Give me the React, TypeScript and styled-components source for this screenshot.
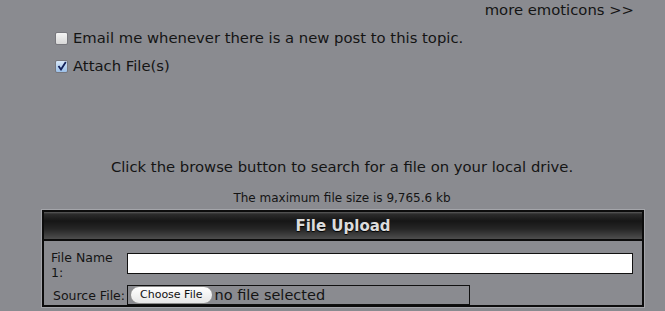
import React from "react";
import styled, { createGlobalStyle } from "styled-components";

const GlobalStyle = createGlobalStyle`
  html, body {
    margin: 0;
    padding: 0;
    background: #8a8b90;
  }
  body {
    font-family: "DejaVu Sans", Verdana, sans-serif;
    color: #141414;
  }
`;

const Page = styled.div`
  width: 665px;
  height: 311px;
  overflow: hidden;
`;

const TopBar = styled.div`
  display: flex;
  justify-content: flex-end;
  padding: 0 31px 0 0;
  height: 22px;
  font-size: 14.8px;
  line-height: 20px;
`;

const Options = styled.div`
  display: flex;
  flex-direction: column;
  gap: 8px;
  padding: 6px 0 0 55px;
`;

const OptionRow = styled.label`
  display: flex;
  align-items: center;
  gap: 5px;
  font-size: 14.8px;
  line-height: 20px;
`;

const Box = styled.span<{ checked?: boolean }>`
  width: 11px;
  height: 11px;
  border: 1px solid #77777d;
  border-radius: 2px;
  background: ${({ checked }) =>
    checked
      ? "linear-gradient(#d7e7f8, #9cc0e8)"
      : "linear-gradient(#f4f4f4, #d8d8d8)"};
  display: flex;
  align-items: center;
  justify-content: center;
`;

const Center = styled.div`
  margin: 81px 21px 0 40px;
  display: flex;
  flex-direction: column;
  align-items: center;
`;

const Hint = styled.div`
  font-size: 14.8px;
  line-height: 20px;
`;

const MaxSize = styled.div`
  margin-top: 13px;
  font-size: 12px;
  line-height: 16px;
`;

const Table = styled.div`
  align-self: stretch;
  margin: 4px 0 0 2px;
  border: 2px solid #0c0c0c;
  box-shadow: 0 0 0 1px #a4a5aa;
`;

const Header = styled.div`
  height: 27px;
  display: flex;
  align-items: center;
  justify-content: center;
  background: linear-gradient(
    #5c5c5c 0px,
    #2c2c2c 2px,
    #161616 9px,
    #262626 17px,
    #4e4e4e 27px
  );
  border-bottom: 2px solid #0c0c0c;
  color: #dcdcdc;
  font-weight: bold;
  font-size: 15px;
  text-shadow: 0 1px 1px #000;
`;

const Row = styled.div<{ top: number; align: string }>`
  display: grid;
  grid-template-columns: 76px 1fr;
  align-items: ${({ align }) => align};
  padding: ${({ top }) => top}px 9px 0 7px;
`;

const Label = styled.div`
  font-size: 12.5px;
  line-height: 15px;
`;

const TextInput = styled.div`
  height: 19px;
  margin-top: 3px;
  background: #fff;
  border: 1px solid #111;
`;

const FileBox = styled.div`
  width: 339px;
  height: 18px;
  border: 1px solid #111;
  display: flex;
  align-items: center;
  gap: 2px;
  padding-left: 2px;
  font-size: 14.5px;
`;

const ChooseButton = styled.span`
  height: 16px;
  padding: 0 9px;
  border-radius: 9px;
  border: 1px solid #8c8c8c;
  background: linear-gradient(#ffffff, #e6e6e6);
  font-size: 11px;
  line-height: 16px;
  color: #111;
`;

const Check = () => (
  <svg width="10" height="10" viewBox="0 0 10 10">
    <path d="M1.5 5 L4 8.5 L8.8 1" fill="none" stroke="#12205a" strokeWidth="1.8" />
  </svg>
);

export default function App() {
  return (
    <Page>
      <GlobalStyle />
      <TopBar>more emoticons &gt;&gt;</TopBar>
      <Options>
        <OptionRow>
          <Box />
          Email me whenever there is a new post to this topic.
        </OptionRow>
        <OptionRow>
          <Box checked>
            <Check />
          </Box>
          Attach File(s)
        </OptionRow>
      </Options>
      <Center>
        <Hint>Click the browse button to search for a file on your local drive.</Hint>
        <MaxSize>The maximum file size is 9,765.6 kb</MaxSize>
        <Table>
          <Header>File Upload</Header>
          <Row top={9} align="start">
            <Label>
              File Name
              <br />
              1:
            </Label>
            <TextInput />
          </Row>
          <Row top={5} align="center">
            <Label>Source File:</Label>
            <FileBox>
              <ChooseButton>Choose File</ChooseButton>
              no file selected
            </FileBox>
          </Row>
        </Table>
      </Center>
    </Page>
  );
}
